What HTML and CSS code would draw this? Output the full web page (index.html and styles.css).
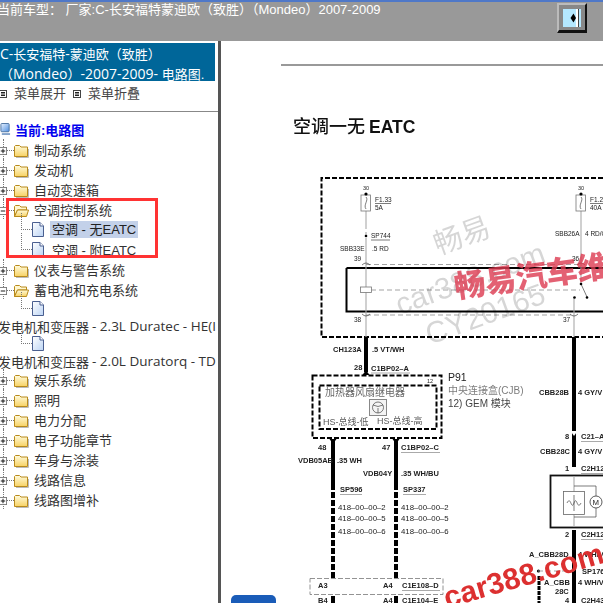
FILE: index.html
```html
<!DOCTYPE html>
<html lang="zh">
<head>
<meta charset="utf-8">
<title>电路图</title>
<link rel="stylesheet" href="styles.css">
</head>
<body>
<svg class="defs" width="0" height="0" aria-hidden="true">
  <defs>
    <linearGradient id="fg" x1="0" y1="0" x2="0" y2="1"><stop offset="0" stop-color="#fffbdc"/><stop offset="1" stop-color="#f7d264"/></linearGradient>
    <linearGradient id="dg" x1="0" y1="0" x2="1" y2="1"><stop offset="0" stop-color="#fff"/><stop offset="1" stop-color="#bcd4f4"/></linearGradient>
    <linearGradient id="pg" x1="0" y1="0" x2="1" y2="1"><stop offset="0" stop-color="#e8f2ff"/><stop offset="1" stop-color="#4f8fe0"/></linearGradient>
    <symbol id="folder" viewBox="0 0 15 14"><path d="M2 13.500H14.500V5" fill="none" stroke="#bbb"/><path d="M.5 12.500V2.500L1.500 1.500H5.500L7 3H13.500V12.500Z" fill="url(#fg)" stroke="#b88a1c"/></symbol>
    <symbol id="folder-open" viewBox="0 0 15 14"><path d="M.5 12.500V2.500L1.500 1.500H5.500L7 3H12.500V6H3.500Z" fill="#fff6cc" stroke="#b88a1c"/><path d="M.5 12.500L3.500 6H14.500L12.500 12.500Z" fill="url(#fg)" stroke="#b88a1c"/></symbol>
    <symbol id="doc" viewBox="0 0 12 15"><path d="M.5 .5H8L11.500 4V14.500H.5Z" fill="url(#dg)" stroke="#4a5f90"/><path d="M8 .5V4H11.500" fill="#fff" stroke="#4a5f90"/></symbol>
    <symbol id="plus" viewBox="0 0 9 9"><rect x=".5" y=".5" width="8" height="8" fill="#fff" stroke="#777"/><path d="M2 4.500H7M4.500 2V7" stroke="#000"/></symbol>
    <symbol id="minus" viewBox="0 0 9 9"><rect x=".5" y=".5" width="8" height="8" fill="#fff" stroke="#777"/><path d="M2 4.500H7" stroke="#000"/></symbol>
    <symbol id="menu-box" viewBox="0 0 8 8"><rect x=".5" y=".5" width="7" height="7" fill="#fff" stroke="#444"/><path d="M2 2.500H6M2 4H6M2 5.500H6" stroke="#222"/></symbol>
  </defs>
</svg>

<header class="topbar">
  <div class="model">当前车型： 厂家:C-长安福特蒙迪欧（致胜）（Mondeo）2007-2009</div>
  <button class="toggle" type="button" aria-label="切换">
    <svg width="18" height="18" viewBox="0 0 18 18"><rect width="18" height="18" fill="#b4e8ff"/><rect x="13" width="2" height="18" fill="#fff"/><rect x="15" width="1" height="18" fill="#444"/><path d="M10.500 4.500L7.500 9L10.500 13.500L13 9Z" fill="#000"/></svg>
  </button>
</header>

<main class="layout">
  <aside class="sidebar">
    <div class="brand">
      <div><span class="lat">C-</span>长安福特<span class="lat">-</span>蒙迪欧（致胜）</div>
      <div>（<span class="lat">Mondeo</span>）<span class="lat">-2007-2009-</span> 电路图.</div>
    </div>
    <nav class="menu-tools">
      <span class="tool"><svg class="menu-icon"><use href="#menu-box"/></svg>菜单展开</span>
      <span class="tool"><svg class="menu-icon"><use href="#menu-box"/></svg>菜单折叠</span>
    </nav>
    <div class="tree">
      <div class="current">
        <svg class="pc" viewBox="0 0 12 14"><rect x="1" y="1" width="9" height="9" rx="1" fill="url(#pg)" stroke="#47709f"/><path d="M2 12.500H11" stroke="#7f9fc8" stroke-width="2"/></svg>
        当前:电路图
      </div>
      <div class="row"><svg class="exp"><use href="#plus"/></svg><i class="dots"></i><svg class="fold"><use href="#folder"/></svg>制动系统</div>
      <div class="row"><svg class="exp"><use href="#plus"/></svg><i class="dots"></i><svg class="fold"><use href="#folder"/></svg>发动机</div>
      <div class="row"><svg class="exp"><use href="#plus"/></svg><i class="dots"></i><svg class="fold"><use href="#folder"/></svg>自动变速箱</div>
      <div class="row"><svg class="exp"><use href="#minus"/></svg><i class="dots"></i><svg class="fold"><use href="#folder-open"/></svg>空调控制系统</div>
      <div class="row leaf"><i class="elbow"></i><svg class="docicon"><use href="#doc"/></svg><span class="selected">空调 - 无EATC</span></div>
      <div class="row leaf"><i class="elbow"></i><svg class="docicon"><use href="#doc"/></svg><span class="leaf-text">空调 - 附EATC</span></div>
      <div class="row"><svg class="exp"><use href="#plus"/></svg><i class="dots"></i><svg class="fold"><use href="#folder"/></svg>仪表与警告系统</div>
      <div class="row"><svg class="exp"><use href="#minus"/></svg><i class="dots"></i><svg class="fold"><use href="#folder-open"/></svg>蓄电池和充电系统</div>
      <div class="row leaf short"><i class="elbow"></i><svg class="docicon"><use href="#doc"/></svg></div>
      <div class="row wrap">发电机和变压器 <span class="lat-w">- 2.3L Duratec - HE(I</span></div>
      <div class="row leaf short"><i class="elbow"></i><svg class="docicon"><use href="#doc"/></svg></div>
      <div class="row wrap">发电机和变压器 <span class="lat-w">- 2.0L Duratorq - TD</span></div>
      <div class="row"><svg class="exp"><use href="#plus"/></svg><i class="dots"></i><svg class="fold"><use href="#folder"/></svg>娱乐系统</div>
      <div class="row"><svg class="exp"><use href="#plus"/></svg><i class="dots"></i><svg class="fold"><use href="#folder"/></svg>照明</div>
      <div class="row"><svg class="exp"><use href="#plus"/></svg><i class="dots"></i><svg class="fold"><use href="#folder"/></svg>电力分配</div>
      <div class="row"><svg class="exp"><use href="#plus"/></svg><i class="dots"></i><svg class="fold"><use href="#folder"/></svg>电子功能章节</div>
      <div class="row"><svg class="exp"><use href="#plus"/></svg><i class="dots"></i><svg class="fold"><use href="#folder"/></svg>车身与涂装</div>
      <div class="row"><svg class="exp"><use href="#plus"/></svg><i class="dots"></i><svg class="fold"><use href="#folder"/></svg>线路信息</div>
      <div class="row"><svg class="exp"><use href="#plus"/></svg><i class="dots"></i><svg class="fold"><use href="#folder"/></svg>线路图增补</div>
      <div class="highlight"></div>
    </div>
  </aside>

  <section class="doc">
    <svg class="sheet" viewBox="221 41 382 562" width="382" height="562">
      <path d="M281 65H603" stroke="#777" stroke-width="1.500"/>
      <text class="title" x="293" y="133">空调一无 <tspan class="title-b">EATC</tspan></text>

      <path class="dash-b" d="M603 178H321.500V337H603"/>
      <path class="b2" d="M346.500 268H603M346.500 268V311.500H603"/>

      <!-- fuses and thin wires -->
      <path class="gw" d="M366 211V226M366 240V372"/>
      <path class="gw" d="M366 226V240" stroke-dasharray="3 3"/>
      <path class="gw" d="M581 211V284M574 297V337"/>
      <rect class="fuse" x="361" y="195" width="9.500" height="16"/>
      <rect class="fuse" x="576" y="195" width="9.500" height="16"/>
      <path class="thin" d="M366 197C369 200 363 205 366 209M581 197C584 200 578 205 581 209"/>
      <circle cx="366" cy="194" r="1.600"/><circle cx="581" cy="194" r="1.600"/><circle cx="366" cy="236" r="1.300"/>
      <path class="gd" d="M366 264.500H580M371 290H580M366 315H574"/>
      <rect class="fuse" x="360.500" y="287" width="11" height="5.500"/>
      <path class="thin" d="M581 284L587 297"/>
      <circle cx="587" cy="297.500" r="1.300"/><circle cx="574.500" cy="297.500" r="1.300"/><circle cx="581" cy="284" r="1.300"/>
      <path class="thin" d="M362 265Q366 261 370 265M577 265Q581 261 585 265M362 314Q366 318 370 314M570 314Q574 318 578 314"/>

      <text class="t5" x="363" y="190">30</text><text class="t5" x="578" y="190">30</text>
      <text class="t6" x="375" y="202">F1.33</text><text class="t6" x="375" y="210">5A</text><path class="thin" d="M375 203.500H391"/>
      <text class="t6" x="590" y="202">F1.28</text><text class="t6" x="590" y="210">40A</text><path class="thin" d="M590 203.500H603"/>
      <text class="t6" x="371" y="238">SP744</text><path class="thin" d="M371 240H390"/>
      <text class="t6" x="340" y="251">SBB33E</text><text class="t6" x="372" y="251">.5 RD</text>
      <text class="t6" x="555" y="236">SBB26A</text><text class="t6" x="585" y="236">4 RD/O</text>
      <text class="t6" x="354" y="261">39</text><text class="t6" x="354" y="322">38</text>
      <text class="t6" x="572" y="261">36</text><text class="t6" x="563" y="322">37</text>

      <!-- thick wires -->
      <path class="k4" d="M366 337V372M574 337V467M574 530V603M333 441V484M396 441V484M333 596V603M396 596V603"/>
      <path class="k4d" d="M333 484V578M396 484V578"/>
      <path class="k3" d="M539 576V603"/>
      <text class="tb" x="333" y="352">CH123A</text><text class="tb" x="372" y="352">.5 VT/WH</text>
      <text class="tb" x="354" y="370">28</text><text class="tb" x="371" y="371">C1BP02–A</text><path class="gl" d="M371 373H410"/>
      <path d="M362.500 375L366 370L369.500 375Z"/>

      <!-- P91 module -->
      <path class="dash-b" d="M312.500 375.500H441.500V438H312.500Z"/>
      <path class="dash-b" d="M319.500 385.500H436.500V429H319.500Z"/>
      <text class="t5" x="427" y="383">12</text>
      <text class="serif" x="325" y="396">加热器风扇继电器</text>
      <rect x="369.500" y="399.500" width="17" height="16" fill="#f4f4f4" stroke="#888"/>
      <circle class="thin" cx="378" cy="407.500" r="5.500"/>
      <path class="thin" d="M373 405Q378 408 383 405M378 408V413"/>
      <text class="hs" x="323" y="425">HS-总线-低</text><text class="hs" x="377" y="424">HS-总线-高</text>
      <text class="p91" x="448" y="381">P91</text>
      <text class="note" x="448" y="394">中央连接盒(CJB)</text>
      <text class="note dark" x="448" y="407">12) GEM 模块</text>
      <path d="M329.500 439L333 444L336.500 439ZM392.500 439L396 444L399.500 439Z"/>

      <text class="tb" x="318" y="450">48</text><text class="tb" x="382" y="450">47</text>
      <text class="tb" x="401" y="450">C1BP02–C</text><path class="gl" d="M401 452.500H440"/>
      <text class="tb" x="298" y="463">VDB05AB</text><text class="tb" x="337" y="463">.35 WH</text>
      <text class="tb" x="363" y="476">VDB04Y</text><text class="tb" x="401" y="476">.35 WH/BU</text>
      <text class="tb" x="340" y="492">SP596</text><text class="tb" x="403" y="492">SP337</text><path class="gl" d="M340 494.500H362M403 494.500H426"/>
      <text class="t7" x="338" y="510">418–00–00–2</text><text class="t7" x="338" y="521">418–00–00–5</text><text class="t7" x="338" y="534">418–00–00–6</text>
      <text class="t7" x="401" y="510">418–00–00–2</text><text class="t7" x="401" y="521">418–00–00–5</text><text class="t7" x="401" y="534">418–00–00–6</text>
      <rect x="310" y="578.500" width="133" height="16" fill="none" stroke="#777" stroke-dasharray="5 2" stroke-width=".8"/>
      <text class="tb" x="318" y="588">A3</text><text class="tb" x="383" y="588">A4</text><text class="tb" x="402" y="588">C1E108–D</text><path class="gl" d="M402 590.500H440"/>
      <text class="tb" x="318" y="603">B4</text><text class="tb" x="383" y="603">A4</text><text class="tb" x="402" y="603">C1E104–E</text>

      <!-- right branch -->
      <text class="tb" x="539" y="395">CBB28B</text><text class="tb" x="578" y="395">4 GY/V</text>
      <path d="M570.500 431L574 436L577.500 431Z" fill="#fff"/>
      <text class="tb" x="565" y="439">8</text><text class="tb" x="581" y="439">C21–A</text><path class="gl" d="M581 441.500H603"/>
      <text class="tb" x="540" y="454">CBB28C</text><text class="tb" x="578" y="454">4 GY/V</text>
      <text class="tb" x="565" y="471">1</text><text class="tb" x="581" y="471">C2H12</text><path class="gl" d="M581 473.500H603"/>
      <rect x="550.500" y="475.500" width="60" height="52" fill="#fff" stroke="#111" stroke-width="1.800"/>
      <path class="gw" d="M574 476V527"/>
      <rect x="563.500" y="491.500" width="21" height="23" fill="#fff" stroke="#666" stroke-width=".8"/>
      <path class="thin" d="M567 503C571 495 571 511 574 503C577 495 577 511 581 503M574 495V511"/>
      <path class="thin" d="M574 486H596V496M574 517H596V508"/>
      <circle cx="596" cy="502" r="6" fill="#fff" stroke="#333" stroke-width=".8"/>
      <text class="t7" x="592.500" y="505">M</text>
      <text class="tb" x="565" y="537">2</text><text class="tb" x="581" y="537">C2H12</text><path class="gl" d="M581 539.500H603"/>
      <text class="tb" x="529" y="557">A_CBB28D</text><text class="tb" x="578" y="557">4 WH/V</text>
      <circle cx="538.500" cy="571" r="1.600"/>
      <path class="gd" d="M538 571H574"/>
      <text class="tb" x="582" y="574">SP176</text>
      <text class="tb" x="544" y="585">A_CBB</text><text class="tb" x="578" y="585">4 WH/V</text>
      <text class="tb" x="555" y="594">28C</text>
      <text class="tb" x="565" y="603">4</text><text class="tb" x="581" y="603">C2H43</text>

      <!-- watermarks -->
      <text class="wm" transform="translate(438 255) rotate(-20)">畅易</text>
      <text class="wm wm-b" transform="translate(400 315) rotate(-20)">car388.com</text>
      <text class="wm wm-b" transform="translate(430 345) rotate(-20)">CY20165</text>
      <text class="red" transform="translate(456 298) rotate(-8)">畅易汽车维</text>
      <text class="red-b" transform="translate(447 608) rotate(-16)">car388.com</text>
    </svg>
    <div class="pill"></div>
  </section>
</main>
</body>
</html>
```

FILE: styles.css
```css
* { box-sizing: border-box; }
html, body { margin: 0; height: 100%; overflow: hidden; }
body {
  background: #fff;
  color: #333;
  font: 13px "Liberation Sans", "Noto Sans CJK SC", sans-serif;
  width: 603px;
  height: 603px;
  display: flex;
  flex-direction: column;
}
.defs { position: absolute; }

.topbar {
  height: 41px;
  flex: none;
  display: flex;
  justify-content: space-between;
  align-items: flex-start;
  background: #999;
  border-top: 2px solid #4f78c8;
}
.model {
  color: #fff;
  font-size: 13px;
  line-height: 16px;
  margin-left: -3px;
  white-space: nowrap;
}
.toggle {
  width: 30px;
  height: 30px;
  margin: 1px 16px 0 0;
  padding: 0;
  display: flex;
  align-items: center;
  justify-content: center;
  background: #888;
  border: 2px solid;
  border-color: #bbb #111 #111 #bbb;
  border-width: 2px 2px 3px 2px;
}

.layout { flex: 1; display: flex; min-height: 0; }
.sidebar {
  width: 221px;
  flex: none;
  border-right: 3px solid #555;
  overflow: hidden;
}
.brand {
  margin: 2px 3px 0 0;
  height: 38px;
  background: #006699;
  color: #fff;
  font-size: 13px;
  line-height: 18px;
  padding-top: 1px;
  white-space: nowrap;
}
.lat { font: 14px "Open Sans", sans-serif; }
.lat-w { font: 13.500px "Open Sans", sans-serif; margin-left: 3px; }
.menu-tools {
  height: 31px;
  display: flex;
  gap: 7px;
  padding-top: 4px;
  border-bottom: 1px solid #888;
  line-height: 18px;
  align-items: flex-start;
  color: #444;
}
.tool { display: flex; align-items: center; gap: 7px; }
.menu-icon { width: 8px; height: 8px; }
.tool:first-child .menu-icon { margin-left: -1px; }

.tree { position: relative; padding-top: 7px; }
.current {
  height: 20px;
  display: flex;
  align-items: center;
  gap: 4px;
  color: #0000ee;
  font-weight: bold;
  font-size: 13px;
  white-space: nowrap;
}
.pc { width: 11px; height: 14px; flex: none; }
.row {
  position: relative;
  height: 20px;
  display: flex;
  align-items: center;
  white-space: nowrap;
  padding-top: 1px;
}
.row::before {
  content: "";
  position: absolute;
  left: 3px;
  top: 0;
  bottom: 0;
  border-left: 1px dotted #777;
}
.wrap { margin-left: -2px; height: 17px; }
.wrap::before, .leaf::before { display: none; }
.short { height: 18px; }
.exp { width: 8px; height: 8px; flex: none; position: relative; margin: 2px 0 0 -1px; }
.dots { width: 7px; height: 0; border-top: 1px dotted #777; flex: none; margin-top: 2px; }
.fold { width: 15px; height: 14px; flex: none; margin: 2px 5px 0 0; }
.leaf { padding-left: 21px; }
.elbow {
  width: 11px;
  height: 17px;
  margin-top: -16px;
  flex: none;
  border-left: 1px dotted #777;
  border-bottom: 1px dotted #777;
}
.docicon { width: 12px; height: 15px; flex: none; margin-right: 6px; }
.selected {
  background: #c3d1e9;
  padding: 0 2px;
  line-height: 17px;
  color: #222;
}
.leaf-text { padding: 0 2px; }
.highlight {
  position: absolute;
  left: 6px;
  top: 86px;
  width: 152px;
  height: 60px;
  border: 3px solid #f33;
  pointer-events: none;
}

.doc { flex: 1; position: relative; overflow: hidden; background: #fff; }
.sheet { display: block; filter: blur(.45px); }
.sheet text { fill: #222; }
.pill {
  position: absolute;
  left: 10px;
  bottom: 0;
  width: 45px;
  height: 8px;
  background: #1a5cb8;
  border-radius: 5px 5px 0 0;
}

.sheet .title { font: 500 18px "Noto Sans CJK SC", sans-serif; fill: #111; }
.title-b { font: bold 17.500px "Liberation Sans", sans-serif; }
.dash-b { fill: none; stroke: #000; stroke-width: 2; stroke-dasharray: 5 2; }
.b2 { fill: none; stroke: #000; stroke-width: 2; }
.gw { fill: none; stroke: #aaa; stroke-width: 1.100; }
.gd { fill: none; stroke: #999; stroke-width: .9; stroke-dasharray: 5 3; }
.gl { fill: none; stroke: #aaa; stroke-width: 1; }
.fuse { fill: #fff; stroke: #777; stroke-width: .8; }
.thin { fill: none; stroke: #444; stroke-width: .7; }
.k4 { fill: none; stroke: #000; stroke-width: 4; }
.k4d { fill: none; stroke: #000; stroke-width: 4; stroke-dasharray: 6 2; }
.k3 { fill: none; stroke: #000; stroke-width: 3; stroke-dasharray: 4 1; }
.t5 { font: 5.500px "Liberation Sans", sans-serif; }
.t6 { font: 6.500px "Liberation Sans", sans-serif; }
.t7 { font: 7.800px "Liberation Sans", sans-serif; }
.tb { font: bold 7.500px "Liberation Sans", sans-serif; }
.serif { font: 10px "Noto Sans CJK SC", serif; opacity: .7; }
.hs { font: 9px "Liberation Sans", "Noto Sans CJK SC", sans-serif; opacity: .75; }
.p91 { font: 10.500px "Liberation Sans", sans-serif; }
.note { font: 10px "Liberation Sans", "Noto Sans CJK SC", sans-serif; opacity: .6; }
.dark { opacity: .85; }
.sheet text.wm { font: 29px "Noto Sans CJK SC", sans-serif; fill: #000; opacity: .16; }
.sheet text.wm-b { font-family: "Liberation Sans", sans-serif; font-size: 30px; }
.sheet text.red { font: 900 31px "Noto Sans CJK SC", sans-serif; fill: #dd3a50; opacity: .8; }
.sheet text.red-b { font: 900 30px "Liberation Sans", sans-serif; fill: #dc3030; }
```
